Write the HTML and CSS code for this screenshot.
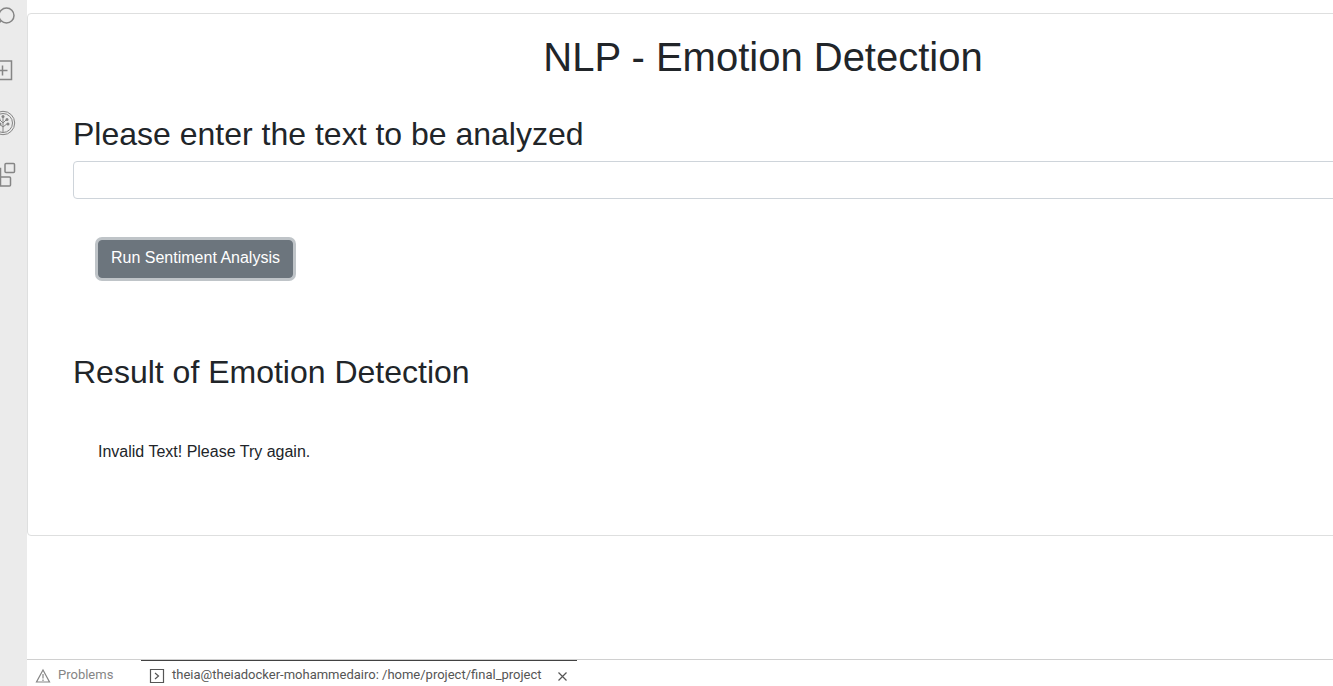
FILE: index.html
```html
<!DOCTYPE html>
<html lang="en">
<head>
<meta charset="utf-8">
<title>NLP - Emotion Detection</title>
<link rel="stylesheet" href="styles.css">
</head>
<body>
<nav class="activity-bar">
  <button class="activity" aria-label="Search"><svg width="27" height="30" viewBox="0 0 27 30"><circle cx="6.5" cy="15.5" r="7.5"/><path d="M1.2 20.8L-4 26"/></svg></button>
  <button class="activity" aria-label="Add"><svg width="27" height="30" viewBox="0 0 27 30"><path d="M-7 8H11.5V26.5H-7M-3 17.5H7.5M2.5 12.5V22.5"/></svg></button>
  <button class="activity" aria-label="Network tree"><svg class="thin" width="27" height="30" viewBox="0 0 27 30"><circle cx="3" cy="17" r="11.7"/><circle cx="3" cy="17" r="9.5"/><path d="M3 27V10M3 21L-2 17M3 21L8 17M3 17L-1 13M3 17L7 13"/><g class="dots"><circle cx="3" cy="10.5" r="1.5"/><circle cx="7" cy="13.5" r="1.5"/><circle cx="8" cy="18" r="1.5"/><circle cx="-1" cy="13.5" r="1.5"/><circle cx="0" cy="18" r="1.5"/></g></svg></button>
  <button class="activity" aria-label="Extensions"><svg width="27" height="30" viewBox="0 0 27 30"><rect x="5" y="4.5" width="9.5" height="9" rx="1"/><path d="M-8 9.5H.5V18H9.5Q10.5 18 10.5 19V26Q10.5 27 9.5 27H-8M.5 18V27"/></svg></button>
</nav>
<div class="workspace">
  <div class="preview">
    <main class="card">
      <h1 class="title">NLP - Emotion Detection</h1>
      <label class="heading" for="textToAnalyze">Please enter the text to be analyzed</label>
      <input class="field" id="textToAnalyze" type="text">
      <button class="run">Run Sentiment Analysis</button>
      <h2 class="heading">Result of Emotion Detection</h2>
      <p class="result">Invalid Text! Please Try again.</p>
    </main>
  </div>
  <footer class="panel">
    <button class="tab"><svg width="16" height="16" viewBox="0 0 16 16"><path d="M8 2L14.5 14H1.5ZM8 6V10.5M8 11.5V13"/></svg>Problems</button>
    <div class="tab active"><svg width="16" height="16" viewBox="0 0 16 16"><path d="M1.5 1.5H14.5V14.5H1.5ZM6 5L9.5 8L6 11"/></svg><span>theia@theiadocker-mohammedairo: /home/project/final_project</span><button class="close" aria-label="Close terminal"><svg width="11" height="11" viewBox="0 0 11 11"><path d="M1.5 1.5L9.5 9.5M9.5 1.5L1.5 9.5"/></svg></button></div>
  </footer>
</div>
</body>
</html>
```
FILE: styles.css
```css
* { box-sizing: border-box; }
body {
  margin: 0;
  height: 100vh;
  display: grid;
  grid-template-columns: 27px minmax(0, 1fr);
  overflow: hidden;
  background: #fff;
  color: #212529;
  font: 16px/24px "Liberation Sans", Arial, sans-serif;
}
button { font: inherit; color: inherit; background: none; border: 0; padding: 0; }
svg { display: block; flex: none; fill: none; stroke: currentColor; }
.activity-bar {
  display: flex;
  flex-direction: column;
  gap: 23px;
  background: #ebebeb;
  color: #858585;
}
.activity svg { stroke-width: 1.5; }
.activity .thin { stroke-width: 1; }
.dots { fill: #858585; stroke: none; }
.workspace { display: flex; flex-direction: column; min-height: 0; }
.preview { flex: 1; min-height: 0; padding-top: 13px; overflow: hidden; }
.card {
  display: flex;
  flex-direction: column;
  /* the previewed page is wider than the visible pane */
  margin-right: -166px;
  padding: 19px 45px 71px;
  border: 1px solid #dedfdf;
  border-radius: 4px;
}
.title { margin: 0 0 34px; font-size: 40px; line-height: 48px; font-weight: 400; text-align: center; }
.heading { margin: 0 0 8px; font-size: 32px; line-height: 38px; font-weight: 400; }
.field {
  height: 38px;
  padding: 6px 12px;
  border: 1px solid #ced4da;
  border-radius: 4px;
  font: inherit;
}
.run {
  align-self: flex-start;
  margin: 41px 25px 75px;
  padding: 6px 12px 8px;
  border: 1px solid #6c757d;
  border-radius: 4px;
  background: #6c757d;
  color: #fff;
  box-shadow: 0 0 0 3px #bfc4c8;
  line-height: 22px;
}
.result { margin: 41px 25px 0; }
.panel {
  display: flex;
  height: 27px;
  border-top: 1px solid #d0d0d0;
  font: 13px/24px Roboto, "Noto Sans", sans-serif;
  color: #858585;
}
.tab {
  display: flex;
  align-items: center;
  gap: 7px;
  width: 114px;
  padding: 3px 8px 0;
  border-top: 1px solid transparent;
  white-space: nowrap;
  line-height: 24px;
}
.tab svg { margin-top: 2px; stroke-width: 1.2; }
.tab.active { width: auto; border-top-color: #424242; color: #555; }
.tab .close { padding: 0 1px 0 8px; }
```
